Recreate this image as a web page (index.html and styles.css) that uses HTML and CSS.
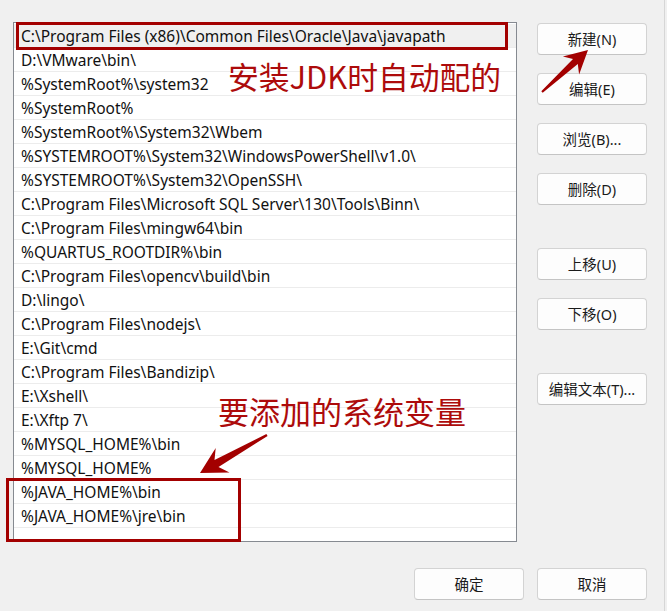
FILE: index.html
```html
<!DOCTYPE html>
<html lang="zh-CN">
<head>
<meta charset="utf-8">
<title>编辑环境变量</title>
<link rel="stylesheet" href="styles.css">
</head>
<body>
<div class="window">
  <div class="main">
    <div class="list">
      <div class="row selected">C:\Program Files (x86)\Common Files\Oracle\Java\javapath</div>
      <div class="row">D:\VMware\bin\</div>
      <div class="row">%SystemRoot%\system32</div>
      <div class="row">%SystemRoot%</div>
      <div class="row">%SystemRoot%\System32\Wbem</div>
      <div class="row">%SYSTEMROOT%\System32\WindowsPowerShell\v1.0\</div>
      <div class="row">%SYSTEMROOT%\System32\OpenSSH\</div>
      <div class="row">C:\Program Files\Microsoft SQL Server\130\Tools\Binn\</div>
      <div class="row">C:\Program Files\mingw64\bin</div>
      <div class="row">%QUARTUS_ROOTDIR%\bin</div>
      <div class="row">C:\Program Files\opencv\build\bin</div>
      <div class="row">D:\lingo\</div>
      <div class="row">C:\Program Files\nodejs\</div>
      <div class="row">E:\Git\cmd</div>
      <div class="row">C:\Program Files\Bandizip\</div>
      <div class="row">E:\Xshell\</div>
      <div class="row">E:\Xftp 7\</div>
      <div class="row">%MYSQL_HOME%\bin</div>
      <div class="row">%MYSQL_HOME%</div>
      <div class="row">%JAVA_HOME%\bin</div>
      <div class="row">%JAVA_HOME%\jre\bin</div>
      <div class="row empty"></div>
    </div>
    <div class="actions">
      <button class="btn">新建(N)</button>
      <button class="btn">编辑(E)</button>
      <button class="btn">浏览(B)...</button>
      <button class="btn">删除(D)</button>
      <button class="btn spaced">上移(U)</button>
      <button class="btn">下移(O)</button>
      <button class="btn spaced">编辑文本(T)...</button>
    </div>
  </div>
  <div class="footer">
    <button class="btn">确定</button>
    <button class="btn">取消</button>
  </div>

  <div class="mark mark-top"></div>
  <div class="mark mark-bottom"></div>
  <div class="note note-top">安装JDK时自动配的</div>
  <div class="note note-bottom">要添加的系统变量</div>
  <svg class="arrows" width="667" height="611" viewBox="0 0 667 611" aria-hidden="true">
    <polygon points="588,50 579.1,74.4 577.8,64.1 542.7,92.7 541.3,91.3 573.0,58.9 562.9,56.6" />
    <polygon points="200,473 229.5,472.4 218.5,467.1 267.6,436.0 266.4,434.0 214.5,460.1 215.7,448.0" />
  </svg>
</div>
</body>
</html>
```

FILE: styles.css
```css
* { box-sizing: border-box; }

html, body {
  margin: 0;
  padding: 0;
  background: #f0f0f0;
}

body {
  font-family: "Noto Sans", "Noto Sans CJK SC", sans-serif;
  color: #1a1a1a;
}

.window {
  position: relative;
  width: 665px;
  height: 611px;
  padding: 22px 0 0 13px;
  border-right: 1px solid #d6d6d6;
  overflow: hidden;
}

.main {
  display: flex;
  gap: 20px;
  align-items: flex-start;
}

.list {
  width: 504px;
  height: 520px;
  background: #ffffff;
  border: 1px solid #868a91;
  padding-top: 1px;
  overflow: hidden;
}

.row {
  height: 24px;
  line-height: 25px;
  padding-left: 7px;
  border-bottom: 1px solid #ececec;
  font-size: 15.5px;
  white-space: nowrap;
  color: #111;
}

.row.selected {
  background: #f0f0f0;
}

.row.empty {
  border-bottom: none;
}

.actions {
  display: flex;
  flex-direction: column;
  gap: 18px;
  padding-top: 1px;
}

.btn {
  width: 110px;
  height: 32px;
  padding: 0 0 2px;
  background: #fdfdfd;
  border: 1px solid #d3d3d3;
  border-bottom-color: #c4c4c4;
  border-radius: 4px;
  font-family: "Noto Sans", "Noto Sans CJK SC", sans-serif;
  font-size: 14.5px;
  color: #1a1a1a;
}

.btn.spaced {
  margin-top: 25px;
}

.footer {
  display: flex;
  justify-content: flex-end;
  gap: 13px;
  margin-top: 26px;
  padding-right: 17px;
}

.mark {
  position: absolute;
  border: 3px solid #a30000;
}

.mark-top {
  left: 16px;
  top: 22px;
  width: 492px;
  height: 28px;
}

.mark-bottom {
  left: 6px;
  top: 478px;
  width: 235px;
  height: 64px;
}

.note {
  position: absolute;
  font-family: "Noto Sans CJK SC", sans-serif;
  color: #ad0b0b;
  white-space: nowrap;
}

.note-top {
  left: 228px;
  top: 61px;
  font-size: 30.8px;
  line-height: 30px;
}

.note-bottom {
  left: 218px;
  top: 395px;
  font-size: 31px;
  line-height: 31px;
}

.arrows {
  position: absolute;
  left: 0;
  top: 0;
  pointer-events: none;
}

.arrows polygon {
  fill: #a30000;
}
```
